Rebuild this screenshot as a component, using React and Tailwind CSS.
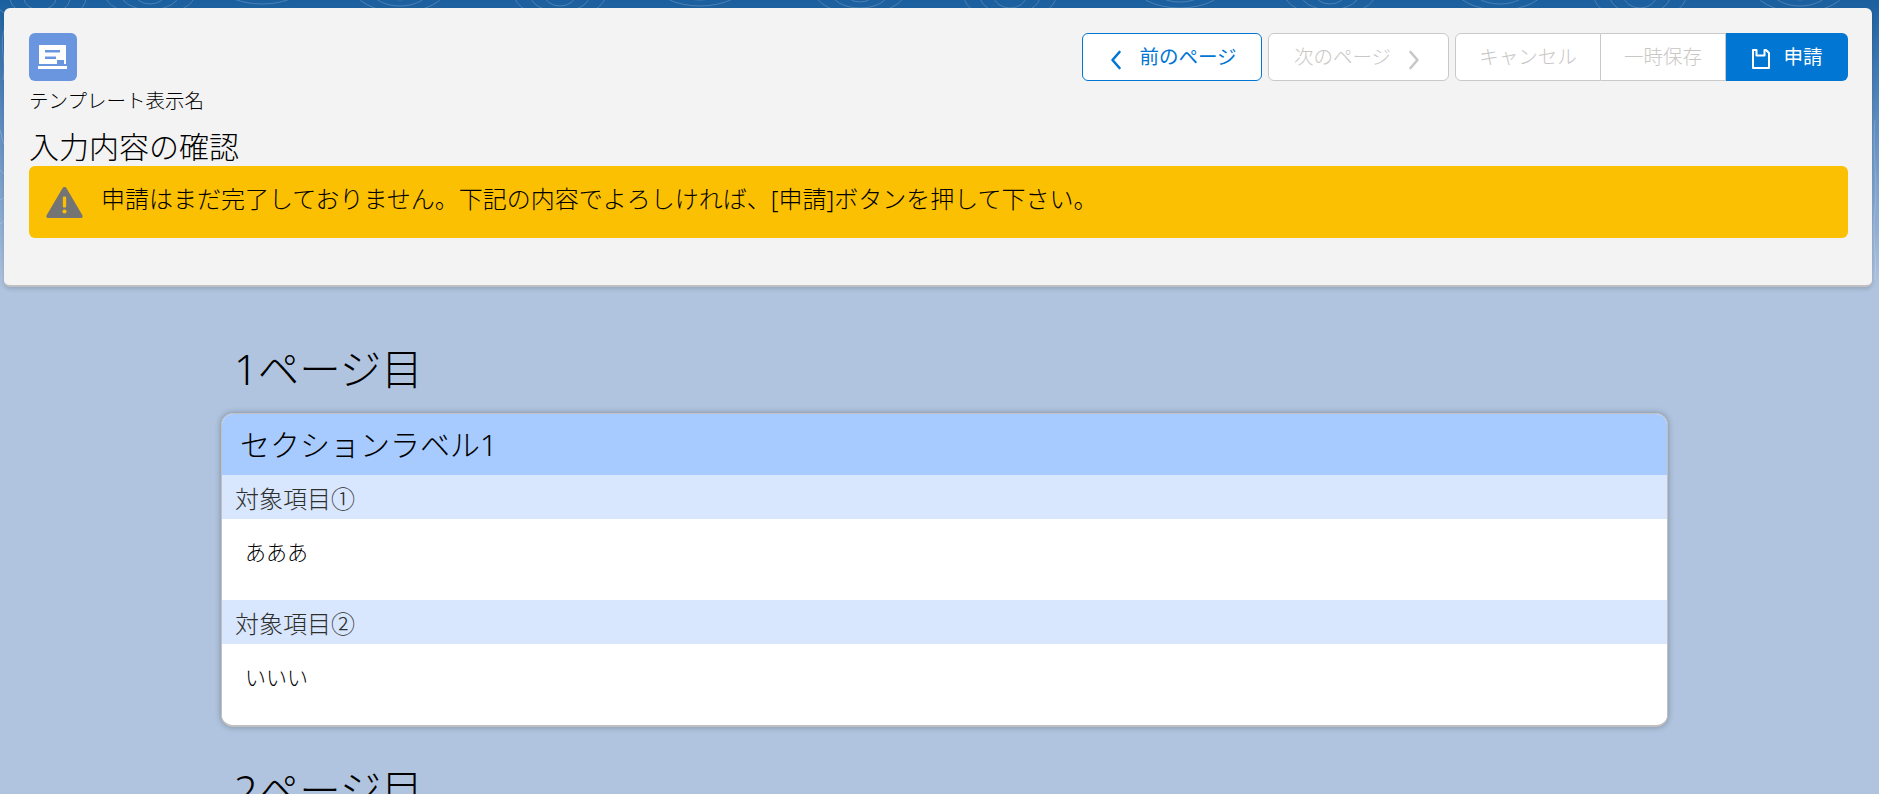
function TopoLines() {
  // faint contour lines behind the header card
  const rings = [
    [40, -2], [150, -8], [262, -20], [400, -12], [560, -6], [700, -18], [860, -10], [1010, -4], [1180, -16], [1330, -8], [1500, -14], [1640, -4], [1800, -12],
  ];
  return (
    <svg className="absolute left-0 top-0 h-[290px] w-full" fill="none" stroke="#ffffff" strokeOpacity="0.2" strokeWidth="1">
      {rings.map(([cx, cy]) => (
        <g key={cx}>
          <ellipse cx={cx} cy={cy} rx="16" ry="12" />
          <ellipse cx={cx} cy={cy} rx="30" ry="18" />
          <ellipse cx={cx} cy={cy} rx="46" ry="24" />
        </g>
      ))}
      <path d="M4 30c-5 20 3 30-1 50" />
      <path d="M0 130c2 6 2 10 4 14M0 170l4 4M0 200l4-2M0 224l4-3" />
      <path d="M1875 120c-3 30 3 60 0 90s2 40 0 70" />
    </svg>
  );
}

function TemplateIcon() {
  return (
    <div className="flex h-12 w-12 items-center justify-center rounded-md bg-[#6a96e0]">
      <svg viewBox="0 0 48 48" className="h-12 w-12">
        <path
          fill="#fff"
          fillRule="evenodd"
          d="M10 12h27v19h-2v-4h-7v4H10zM16 17v2.500h15V17zM16 23.500V26h11v-2.500zM9 33h29v3H9z"
        />
      </svg>
    </div>
  );
}

function WarningIcon() {
  return (
    <svg viewBox="0 0 36 32" className="h-8 w-[37px] shrink-0" preserveAspectRatio="none">
      <path fill="#747474" d="M18 1c.9 0 1.600.5 2 1.200l15.400 27c.7 1.200-.1 2.800-1.500 2.800H2.100C.7 32-.1 30.400.6 29.200L16 2.200C16.400 1.500 17.100 1 18 1z" />
      <rect x="16.400" y="10.500" width="3.200" height="11" rx="1" fill="#fcc003" />
      <circle cx="18" cy="25.500" r="2" fill="#fcc003" />
    </svg>
  );
}

function Chevron({ dir, className }) {
  return (
    <svg viewBox="0 0 14 20" className={className} fill="none" stroke="currentColor" strokeWidth="2.600" strokeLinecap="round" strokeLinejoin="round">
      <path d={dir === 'left' ? 'M10.500 2 3.500 10l7 8' : 'M3.500 2l7 8-7 8'} />
    </svg>
  );
}

function SaveIcon() {
  return (
    <svg viewBox="0 0 20 22" className="mt-[3px] h-[22px] w-5" fill="none" stroke="currentColor" strokeWidth="2">
      <path d="M2 2h3.500v5.500h8V2H15l3 3v15H2z" strokeLinejoin="round" />
    </svg>
  );
}

function Field({ label, value }) {
  return (
    <div>
      <div className="flex h-11 items-center bg-[#d8e6fe] pl-[13px] pt-1 text-2xl leading-none text-[#2e2e2c]">{label}</div>
      <div className="h-[81px] bg-white pl-[23px] pt-[18px] text-[21px] leading-[30px]">{value}</div>
    </div>
  );
}

function App() {
  return (
    <div className="relative h-screen overflow-hidden bg-[linear-gradient(#1b5f9f_0px,#5d8cc0_120px,#b0c4df_290px)] font-['Noto_Sans','Noto_Sans_CJK_JP',sans-serif] font-light text-black">
      <TopoLines />

      <div className="relative pl-1 pr-[7px] pt-2">
        {/* Header */}
        <div className="h-[279px] rounded-md border-b-2 border-[#c0c0c0] bg-[#f3f3f3] pl-[25px] pr-6 pt-[25px] shadow-[0_2px_4px_rgba(0,0,0,0.15)]">
          <div className="flex items-start justify-between">
            <div>
              <TemplateIcon />
              <div className="mt-[6px] text-[19.5px] leading-7">テンプレート表示名</div>
            </div>
            <div className="flex gap-[6px]">
              <button className="flex h-12 w-[180px] items-center justify-center gap-4 rounded-md border border-[#0176d3] bg-white text-[19.5px] font-normal text-[#0176d3]">
                <Chevron dir="left" className="ml-[2px] mt-[6px] h-5 w-[14px]" />
                前のページ
              </button>
              <button className="flex h-12 w-[181px] items-center justify-center gap-4 rounded-md border border-[#c9c9c9] bg-white text-[19.5px] text-[#c9c7c5]">
                次のページ
                <Chevron dir="right" className="mr-[2px] mt-[6px] h-5 w-[14px]" />
              </button>
              <div className="flex h-12 w-[393px]">
                <button className="w-[146px] rounded-l-md border border-[#c9c9c9] bg-white text-[19.5px] text-[#c9c7c5]">キャンセル</button>
                <button className="w-[125px] border-y border-r border-[#c9c9c9] bg-white text-[19.5px] text-[#c9c7c5]">一時保存</button>
                <button className="flex flex-1 items-center justify-center gap-3 rounded-r-md bg-[#0176d3] text-[19.5px] font-normal text-white">
                  <SaveIcon />
                  申請
                </button>
              </div>
            </div>
          </div>
          <h1 className="mt-3 text-[30px] leading-[39px]">入力内容の確認</h1>
          <div className="flex h-[72px] items-center gap-[18px] rounded-md bg-[#fcc003] pl-[17px] text-2xl">
            <WarningIcon />
            <span className="-mt-[6px]">申請はまだ完了しておりません。下記の内容でよろしければ、[申請]ボタンを押して下さい。</span>
          </div>
        </div>

        {/* Pages */}
        <div className="ml-[217px] w-[1447px]">
          <h2 className="ml-[13px] mt-[52px] text-[41.5px] leading-[60px]">1ページ目</h2>
          <div className="mt-[14px] overflow-hidden rounded-xl border border-b-2 border-[#c0c0c0] bg-white shadow-[0_0_6px_rgba(0,0,0,0.3)]">
            <div className="flex h-[61px] items-center bg-[#a8cbff] pl-[18px] text-[30px]">セクションラベル1</div>
            <Field label="対象項目①" value="あああ" />
            <Field label="対象項目②" value="いいい" />
          </div>
          <h2 className="ml-[13px] mt-[33px] text-[41.5px] leading-[60px]">2ページ目</h2>
        </div>
      </div>
    </div>
  );
}

export default App;
